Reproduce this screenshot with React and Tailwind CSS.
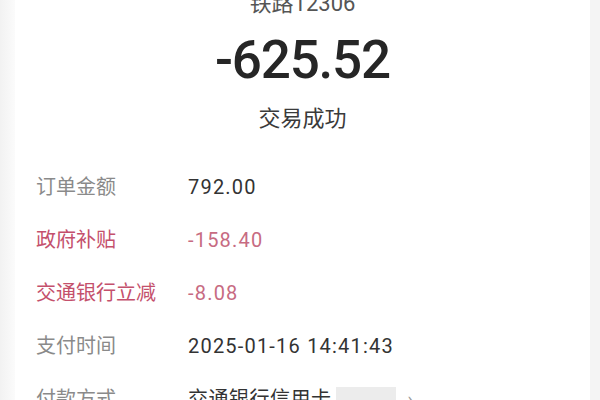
import React from 'react';

const rows = [
  { label: '订单金额', value: '792.00', red: false },
  { label: '政府补贴', value: '-158.40', red: true },
  { label: '交通银行立减', value: '-8.08', red: true },
  { label: '支付时间', value: '2025-01-16 14:41:43', red: false },
];

const cjk = "font-['Roboto','Noto_Sans_CJK_SC',sans-serif]";

const App = () => {
  return (
    <div className={`w-[600px] h-[400px] overflow-hidden bg-[#f3f3f3] flex ${cjk}`}>
      <div className="w-[15px] shrink-0 bg-gradient-to-r from-[#f2f2f2] to-[#fbfbfb]" />
      <div className="flex-1 bg-white flex flex-col">
        {/* header */}
        <div className="flex flex-col items-center">
          <div className="mt-[-11px] text-[22px] leading-[30px] text-[#555]">铁路12306</div>
          <div className="mt-[11px] text-[53px] leading-[60px] font-medium text-[#262626] tracking-[-1.2px]">-625.52</div>
          <div className="mt-[15px] text-[22px] leading-[28px] text-[#3a3a3a]">交易成功</div>
        </div>

        {/* details */}
        <div className="mt-[27px] pl-[21px] flex flex-col">
          {rows.map((r) => (
            <div key={r.label} className="h-[53px] shrink-0 flex items-center text-[20px]">
              <span className={`w-[152px] shrink-0 ${r.red ? 'text-[#c4506c]' : 'text-[#8a8a8a]'}`}>{r.label}</span>
              <span className={`tracking-[1.2px] ${r.red ? 'text-[#c76b82]' : 'text-[#333]'}`}>{r.value}</span>
            </div>
          ))}
          <div className="h-[53px] shrink-0 flex items-center text-[20px]">
            <span className="w-[152px] shrink-0 text-[#8a8a8a]">付款方式</span>
            <span className="text-[#333] tracking-[0.5px]">交通银行信用卡</span>
            <span className="ml-[4px] w-[60px] h-[24px] bg-[#ececec]" />
            <span className="ml-[12px] text-[#999] text-[18px]">›</span>
          </div>
        </div>
      </div>
      <div className="w-[10px] shrink-0 bg-[#f4f4f4]" />
    </div>
  );
};

export default App;
